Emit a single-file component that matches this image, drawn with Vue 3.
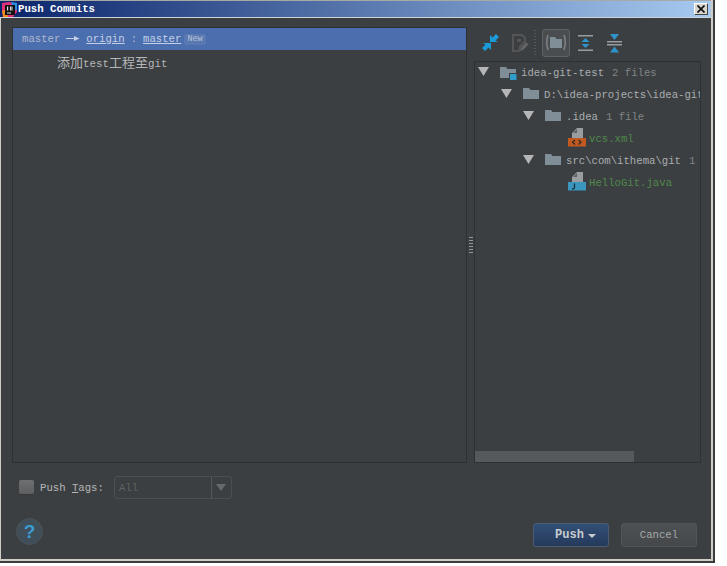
<script setup>
const rows = [
  { pad: 3, type: 'root', name: 'idea-git-test', meta: '2 files' },
  { pad: 26, type: 'folder', name: 'D:\\idea-projects\\idea-git-test', meta: '' },
  { pad: 48, type: 'folder', name: '.idea', meta: '1 file' },
  { pad: 71, type: 'xml', name: 'vcs.xml', meta: '' },
  { pad: 48, type: 'folder', name: 'src\\com\\ithema\\git', meta: '1 file' },
  { pad: 71, type: 'java', name: 'HelloGit.java', meta: '' }
]
</script>

<template>
  <div class="window">
    <header class="title">
      <svg class="logo" width="15" height="15" viewBox="0 0 15 15">
        <path d="M0 1 7 0 15 2 15 10 11 15 2 15 0 9Z" fill="#e0327a" />
        <path d="M0 9 1 15 6 15 4 7Z" fill="#f58a1f" />
        <path d="M9 0 15 1 15 8 12 8Z" fill="#2b8fe0" />
        <rect x="3" y="3" width="10" height="10" fill="#111" />
        <rect x="5" y="4.5" width="1.2" height="4" fill="#ddd" />
        <rect x="8" y="4.5" width="1.2" height="4" fill="#ddd" />
        <rect x="9.4" y="4.5" width="1.2" height="4" fill="#bbb" />
        <rect x="5" y="10.5" width="4" height="1" fill="#ddd" />
      </svg>
      <span class="title-text">Push Commits</span>
      <span class="close">
        <svg width="8" height="8" viewBox="0 0 8 8"><path d="M0.5 0.5 7.5 7.5M7.5 0.5 0.5 7.5" stroke="#111" stroke-width="1.7" /></svg>
      </span>
    </header>

    <div class="body">
      <main class="main">
        <section class="commits">
          <div class="branch">
            <span>master</span>
            <svg class="push-arrow" width="14" height="7" viewBox="0 0 14 7"><path d="M0 3.5H9" stroke="#c6d0e4" stroke-width="1" /><path d="M8 1 13.5 3.5 8 6Z" fill="#c6d0e4" /></svg>
            <a class="link">origin</a>
            <span class="colon">:</span>
            <a class="link">master</a>
            <span class="badge">New</span>
          </div>
          <div class="commit">添加<span class="latin">test</span>工程至<span class="latin">git</span></div>
        </section>

        <div class="splitter"><span class="grip"></span></div>

        <aside class="side">
          <div class="toolbar">
            <svg class="tool t-arrows" width="20" height="20" viewBox="0 0 20 20">
              <path d="M9 9V2L11.500 4.500 15 1 18 4 14.500 7.500 17 9Z" fill="#1b9ad8" />
              <path d="M10 10V17L7.500 14.500 4 18 1 15 4.500 11.500 2 10Z" fill="#1b9ad8" />
            </svg>
            <svg class="tool t-edit" width="17" height="18" viewBox="0 0 17 18">
              <path d="M1 1H10L13 4V7L8 13 7 17H1Z" fill="none" stroke="#535557" stroke-width="2" />
              <path d="M5 5H9V8H5Z" fill="#535557" />
              <path d="M9 14 14 8 16.5 10.5 11 16 8 17Z" fill="#636567" />
            </svg>
            <span class="dots"></span>
            <span class="toggle">
              <svg width="22" height="17" viewBox="0 0 22 17">
                <path d="M3 1Q0.5 8.500 3 16" fill="none" stroke="#7b8185" stroke-width="1.600" />
                <path d="M19 1Q21.5 8.500 19 16" fill="none" stroke="#7b8185" stroke-width="1.600" />
                <path d="M5 3H10L11.500 5H17V14H5Z" fill="#7f8e97" />
              </svg>
            </span>
            <svg class="tool t-expand" width="15" height="18" viewBox="0 0 15 18">
              <rect x="0" y="1" width="15" height="1.500" fill="#9a9d9f" />
              <rect x="0" y="15.500" width="15" height="1.500" fill="#9a9d9f" />
              <path d="M7.500 4 11.500 8H3.500Z" fill="#2f93c9" />
              <path d="M7.500 14 11.500 10H3.500Z" fill="#2f93c9" />
            </svg>
            <svg class="tool t-collapse" width="15" height="20" viewBox="0 0 15 20">
              <rect x="0" y="8" width="15" height="1.500" fill="#9a9d9f" />
              <rect x="0" y="11" width="15" height="1.500" fill="#9a9d9f" />
              <path d="M7.500 7 3 1H12Z" fill="#2f93c9" />
              <path d="M7.500 13.500 3 19.500H12Z" fill="#2f93c9" />
            </svg>
          </div>
          <div class="tree-box">
            <div class="tree">
              <div v-for="row in rows" :key="row.name" class="row" :style="{ paddingLeft: row.pad + 'px' }">
                <template v-if="row.type === 'root' || row.type === 'folder'">
                  <svg class="twisty" width="11" height="9" viewBox="0 0 11 9"><path d="M0 0H11L5.500 9Z" fill="#b4b6b7" /></svg>
                  <svg class="folder" :class="{ rootf: row.type === 'root' }" width="18" height="16" viewBox="0 0 18 16">
                    <path d="M1 2H7L8.500 4H17V13H1Z" fill="#7f8e97" />
                    <rect v-if="row.type === 'root'" x="10.500" y="8.500" width="7.500" height="7" fill="#2f9ccb" stroke="#3c3f41" stroke-width="1" />
                  </svg>
                </template>
                <svg v-else class="file" width="18" height="19" viewBox="0 0 18 19">
                  <path d="M4 10V5L9 0H15V10Z" fill="#9a9d9f" />
                  <path d="M5 5H9V1Z" fill="#5f6264" />
                  <rect y="10" width="18" height="8.500" :fill="row.type === 'xml' ? '#c2591f' : '#3b96bd'" />
                  <path v-if="row.type === 'xml'" d="M7 12 4.500 14.200 7 16.500M10.500 12 13 14.200 10.500 16.500" fill="none" stroke="#2d2a26" stroke-width="1.200" />
                  <path v-else d="M6.500 11.500V15.500Q6.500 17 4 17" fill="none" stroke="#17333f" stroke-width="1.300" />
                </svg>
                <span class="name" :class="{ green: row.type === 'xml' || row.type === 'java' }">{{ row.name }}</span>
                <span v-if="row.meta" class="meta">{{ row.meta }}</span>
              </div>
            </div>
            <div class="hscroll"><span class="thumb"></span></div>
          </div>
        </aside>
      </main>

      <div class="tags">
        <span class="check"></span>
        <span class="tags-label">Push <u>T</u>ags:</span>
        <span class="combo">
          <span class="combo-value">All</span>
          <span class="combo-btn"><i class="combo-caret"></i></span>
        </span>
      </div>

      <footer class="footer">
        <span class="help">?</span>
        <div class="buttons">
          <button class="btn primary">Push<i class="caret"></i></button>
          <button class="btn">Cancel</button>
        </div>
      </footer>
    </div>
  </div>
</template>

<style>
html, body { margin: 0; background: #fff; }
</style>

<style scoped>
.window {
  box-sizing: border-box;
  width: 715px;
  height: 563px;
  display: flex;
  flex-direction: column;
  background: #3c3f41;
  border-right: 2px solid #3a3c3e;
  border-bottom: 2px solid #3a3c3e;
  box-shadow: inset -2px -2px 0 #cfcdc6;
  font-family: "Liberation Mono", monospace;
  font-size: 10.650px;
  color: #a9adb0;
  overflow: hidden;
}
.title {
  box-sizing: border-box;
  height: 18px;
  flex: none;
  margin-right: 2px;
  display: flex;
  align-items: center;
  padding: 0 3px 0 2px;
  background: linear-gradient(90deg, #0a246a, #a6caf0);
  border-top: 1px solid #a8a8a4;
  border-bottom: 1px solid #cfd4d8;
}
.logo { flex: none; }
.title-text {
  margin-left: 1px;
  font-weight: 700;
  font-size: 10.700px;
  color: #fff;
}
.close {
  margin-left: auto;
  width: 14px;
  height: 12px;
  display: flex;
  align-items: center;
  justify-content: center;
  background: #d8d5cc;
  border: 1px solid;
  border-color: #fff #444 #444 #fff;
  box-sizing: border-box;
}
.body {
  flex: 1;
  min-height: 0;
  display: flex;
  flex-direction: column;
  padding: 9px 12px 0 11px;
  border-left: 1px solid #cfcdc6;
}
.main {
  height: 436px;
  flex: none;
  display: flex;
}
.commits {
  box-sizing: border-box;
  width: 455px;
  flex: none;
  border: 1px solid #2e3032;
}
.branch {
  height: 22px;
  display: flex;
  align-items: center;
  padding-left: 9px;
  background: #4b6eaf;
  color: #aeb8cc;
}
.push-arrow { margin: 0 6px 2px 6px; }
.link { color: #c5d0e6; text-decoration: underline; }
.colon { margin: 0 6px; }
.badge {
  margin-left: 3px;
  padding: 0 3px;
  height: 11px;
  line-height: 11px;
  font-size: 8.500px;
  background: #5a78b2;
  border-radius: 2px;
  color: #b8c4d8;
}
.commit {
  margin-top: 3px;
  padding-left: 44px;
  height: 18px;
  line-height: 18px;
  font-family: "Noto Sans CJK SC", monospace;
  font-size: 13px;
  color: #b4b6b8;
}
.latin {
  font-family: "Liberation Mono", monospace;
  font-size: 10.800px;
}
.splitter {
  width: 7px;
  flex: none;
  display: flex;
  align-items: center;
  justify-content: center;
}
.grip {
  width: 4px;
  height: 17px;
  background: repeating-linear-gradient(180deg, #a8aaac 0 1px, #3c3f41 1px 3px);
  opacity: 0.8;
}
.side {
  flex: 1;
  min-width: 0;
  display: flex;
  flex-direction: column;
}
.toolbar {
  box-sizing: border-box;
  height: 34px;
  padding: 0 0 3px 7px;
  flex: none;
  display: flex;
  align-items: center;
}
.tool { flex: none; }
.t-edit { margin-left: 11px; }
.dots {
  width: 2px;
  height: 26px;
  margin-left: 5px;
  background: repeating-linear-gradient(180deg, #55585a 0 1px, transparent 1px 3px);
}
.toggle {
  box-sizing: border-box;
  width: 28px;
  height: 28px;
  margin-left: 6px;
  display: flex;
  align-items: center;
  justify-content: center;
  background: #4a4d4f;
  border: 1px solid #606365;
  border-radius: 3px;
}
.t-expand { margin-left: 8px; }
.t-collapse { margin-left: 14px; }
.tree-box {
  flex: 1;
  min-height: 0;
  display: flex;
  flex-direction: column;
  border: 1px solid #2e3032;
}
.tree {
  flex: 1;
  min-height: 0;
  overflow: hidden;
}
.row {
  box-sizing: border-box;
  height: 22px;
  display: flex;
  align-items: center;
  white-space: nowrap;
  color: #a9adb0;
}
.twisty { flex: none; margin-right: 10px; margin-bottom: 3px; }
.folder { flex: none; margin-right: 4px; margin-bottom: 3px; }
.rootf { margin-right: 4px; margin-bottom: 0; }
.file { flex: none; margin: 0 3px 3px 22px; }
.name { flex: none; }
.green { color: #4f8a4b; }
.meta { margin-left: 8px; color: #7f8487; }
.hscroll {
  height: 11px;
  flex: none;
  display: flex;
}
.thumb {
  width: 159px;
  background: #56595b;
}
.tags {
  flex: none;
  margin-top: 13px;
  height: 23px;
  display: flex;
  align-items: center;
}
.check {
  box-sizing: border-box;
  width: 15px;
  height: 15px;
  margin-left: 7px;
  background: linear-gradient(180deg, #6e7072, #5c5e60);
  border-radius: 2px;
  border-bottom: 1px solid #353739;
}
.tags-label { margin-left: 6px; color: #b4b6b8; }
.combo {
  box-sizing: border-box;
  width: 118px;
  height: 23px;
  margin-left: 10px;
  display: flex;
  align-items: center;
  border: 1px solid #4c4f51;
  border-radius: 3px;
}
.combo-value {
  flex: 1;
  padding-left: 4px;
  color: #5f6264;
}
.combo-btn {
  width: 19px;
  height: 100%;
  display: flex;
  align-items: center;
  justify-content: center;
  border-left: 1px solid #55585a;
}
.combo-caret {
  width: 0;
  height: 0;
  border-left: 5px solid transparent;
  border-right: 5px solid transparent;
  border-top: 7px solid #66696b;
}
.footer {
  flex: none;
  margin-top: 19px;
  height: 29px;
  display: flex;
  justify-content: space-between;
  align-items: flex-end;
}
.help {
  box-sizing: border-box;
  width: 27px;
  height: 27px;
  margin: 0 0 2px 4px;
  display: flex;
  align-items: center;
  justify-content: center;
  border-radius: 50%;
  background: #3f4e58;
  border: 1px solid #4d5255;
  color: #3d9bd0;
  font-family: "Liberation Sans", sans-serif;
  font-weight: 700;
  font-size: 19px;
}
.buttons {
  display: flex;
  gap: 12px;
  margin-right: 4px;
}
.btn {
  box-sizing: border-box;
  width: 76px;
  height: 24px;
  padding: 0;
  display: flex;
  align-items: center;
  justify-content: center;
  background: linear-gradient(180deg, #4d5153, #45484a);
  border: 1px solid #525557;
  border-radius: 3px;
  font-family: "Liberation Mono", monospace;
  font-size: 10.650px;
  color: #a4a8aa;
}
.primary {
  background: linear-gradient(180deg, #324f75, #243a5c);
  border-color: #4a5b72;
  color: #c8ccd0;
  font-weight: 700;
  font-size: 12px;
  padding-left: 9px;
}
.caret {
  margin-left: 4px;
  margin-top: 2px;
  width: 0;
  height: 0;
  border-left: 4px solid transparent;
  border-right: 4px solid transparent;
  border-top: 4px solid #c8ccd0;
}
</style>
